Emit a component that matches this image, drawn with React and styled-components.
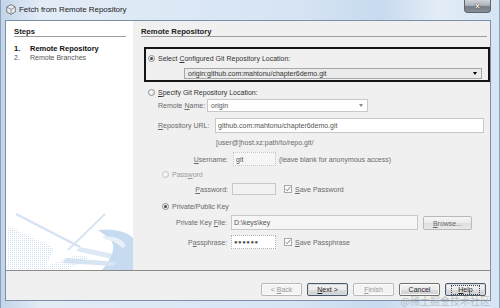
import React from 'react';
import styled, { createGlobalStyle } from 'styled-components';

const Global = createGlobalStyle`
  html, body { margin: 0; padding: 0; width: 500px; height: 308px; overflow: hidden; background: #fff; }
  #root { width: 500px; height: 308px; }
  * { box-sizing: border-box; }
`;

const Window = styled.div`
  position: relative;
  width: 500px;
  height: 308px;
  display: flex;
  flex-direction: column;
  padding: 0 8px 7px 4px;
  background: linear-gradient(90deg, #c3d4e9 0%, #e2ecf7 8%, #dce8f5 35%, #d6e4f3 60%, #c7daef 76%, #e3edf8 88%, #d6e4f3 100%);
  border-left: 1px solid #8aa0bb;
  border-right: 1px solid #8aa0bb;
  font-family: "Liberation Sans", Arial, sans-serif;
  color: #333;
`;

const TitleBar = styled.div`
  height: 20px;
  flex: none;
  display: flex;
  align-items: flex-start;
  padding-left: 1px;
`;

const TitleIcon = styled.svg`
  margin-top: 4px;
  width: 10px;
  height: 11px;
  flex: none;
`;

const TitleText = styled.div`
  margin-top: 5px;
  margin-left: 3px;
  font-size: 8px;
  line-height: 10px;
  color: #1c1c1c;
  letter-spacing: -0.05px;
`;

const CloseButton = styled.div`
  margin-left: auto;
  width: 27px;
  height: 13px;
  border: 1px solid #5c636c;
  border-top: none;
  border-radius: 0 0 4px 4px;
  background: linear-gradient(180deg, #d0d4d9 0%, #acb2b9 45%, #767d86 55%, #868d95 100%);
  display: flex;
  align-items: center;
  justify-content: center;
  color: #fff;
  font-size: 8px;
  font-weight: bold;
  line-height: 1;
  text-shadow: 0 0 1px #333, 0 0 1px #333;
`;

const Dialog = styled.div`
  flex: 1;
  display: flex;
  flex-direction: column;
  background: #f0f0f0;
  border: 1px solid #7b8fa8;
  min-height: 0;
`;

const Main = styled.div`
  flex: 1;
  display: flex;
  min-height: 0;
`;

const StepsPanel = styled.div`
  width: 127px;
  flex: none;
  background: #fff;
  display: flex;
  flex-direction: column;
`;

const StepsInner = styled.div`
  padding: 6px 7px 0 8px;
`;

const SectionTitle = styled.div`
  font-size: 7.7px;
  font-weight: bold;
  line-height: 9px;
  color: #222;
  border-bottom: 1px solid #9c9c9c;
  margin-right: ${p => p.$mr || 0}px;
`;

const StepList = styled.div`
  margin-top: 7px;
  display: flex;
  flex-direction: column;
`;

const Step = styled.div`
  display: flex;
  font-size: ${p => (p.$active ? 7.5 : 7)}px;
  line-height: 9px;
  font-weight: ${p => (p.$active ? 'bold' : 'normal')};
  color: ${p => (p.$active ? '#111' : '#555')};
`;

const StepNum = styled.span`
  width: 16px;
  flex: none;
`;

const Decoration = styled.svg`
  margin-top: auto;
  display: block;
  width: 127px;
  height: 60px;
`;

const Content = styled.div`
  flex: 1;
  padding: 6px 1px 0 8px;
  display: flex;
  flex-direction: column;
`;

const HighlightBox = styled.div`
  margin: 10px -1px 0 3px;
  border: 2px solid #151515;
  padding: 2px 6px 1px 2px;
  display: flex;
  flex-direction: column;
`;

const OptionRow = styled.div`
  display: flex;
  align-items: center;
  height: 10px;
  margin-top: ${p => p.$mt || 0}px;
  padding-left: ${p => p.$indent || 0}px;
  font-size: 7px;
  color: ${p => p.$color || '#333'};
  gap: 3px;
  white-space: nowrap;
`;

const Radio = styled.span`
  position: relative;
  width: 7px;
  height: 7px;
  flex: none;
  border-radius: 50%;
  border: 1px solid ${p => (p.$disabled ? '#c4c4c4' : '#8e8e8e')};
  background: radial-gradient(circle at 40% 40%, #ffffff 0%, #e4e4e4 100%);
  &::after {
    content: '';
    display: ${p => (p.$checked ? 'block' : 'none')};
    position: absolute;
    left: 1px;
    top: 1px;
    width: 3px;
    height: 3px;
    border-radius: 50%;
    background: #4a4a4a;
  }
`;

const Mn = styled.span`
  text-decoration: underline;
  text-underline-offset: 1px;
`;

const Combo = styled.div`
  display: flex;
  align-items: center;
  height: ${p => p.$h || 11}px;
  width: ${p => (p.$w ? `${p.$w}px` : 'auto')};
  margin: ${p => p.$margin || '0'};
  padding: 0 4px 0 3px;
  background: ${p => p.$bg || '#fff'};
  border: 1px solid ${p => p.$border || '#bdbdbd'};
  font-size: 7px;
  color: ${p => p.$color || '#444'};
  white-space: nowrap;
  overflow: hidden;
  flex: none;
`;

const ComboText = styled.span`
  flex: 1;
`;

const Arrow = styled.span`
  width: 0;
  height: 0;
  border-left: 2.5px solid transparent;
  border-right: 2.5px solid transparent;
  border-top: 3px solid ${p => p.$color || '#000'};
  flex: none;
`;

const FieldRow = styled.div`
  display: flex;
  align-items: center;
  height: ${p => p.$h}px;
  margin-top: ${p => p.$mt || 0}px;
  padding-left: ${p => p.$indent || 0}px;
  font-size: 7px;
  color: #6a6a6a;
  white-space: nowrap;
`;

const Label = styled.span`
  width: ${p => p.$w}px;
  flex: none;
  text-align: ${p => (p.$right ? 'right' : 'left')};
  padding-right: ${p => p.$gap || 0}px;
  color: ${p => p.$color || '#6a6a6a'};
`;

const Field = styled.div`
  width: ${p => p.$w}px;
  height: 100%;
  flex: none;
  display: flex;
  align-items: center;
  padding-left: 2px;
  background: ${p => p.$bg || '#fff'};
  border: 1px ${p => p.$style || 'solid'} ${p => p.$border || '#c3c3c3'};
  color: ${p => p.$color || '#555'};
  font-size: ${p => p.$fs || 7}px;
  letter-spacing: ${p => p.$ls || 0}px;
  overflow: hidden;
`;

const Hint = styled.div`
  margin: 5px 0 0 75px;
  font-size: 7px;
  line-height: 9px;
  color: #6a6a6a;
`;

const Note = styled.span`
  margin-left: 3px;
  color: #6a6a6a;
`;

const CheckWrap = styled.span`
  display: flex;
  align-items: center;
  gap: 3px;
  margin-left: 8px;
  color: #6a6a6a;
`;

const CheckBox = styled.span`
  width: 8px;
  height: 8px;
  flex: none;
  border: 1px solid #a9a9a9;
  background: #fafafa;
  display: flex;
  align-items: center;
  justify-content: center;
`;

const BrowseButton = styled.div`
  margin-left: 5px;
  width: 49px;
  height: 14px;
  align-self: flex-end;
  border: 1px solid #b9b9b9;
  border-radius: 2px;
  background: linear-gradient(180deg, #f6f6f6 0%, #ebebeb 50%, #dfdfdf 51%, #e8e8e8 100%);
  display: flex;
  align-items: center;
  justify-content: center;
  font-size: 7px;
  color: #6a6a6a;
`;

const Footer = styled.div`
  height: 30px;
  flex: none;
  border-top: 1px solid #8a8a8a;
  padding: 12px 4px 0 0;
  display: flex;
  justify-content: flex-end;
  align-items: flex-start;
  gap: 5px;
`;

const Button = styled.div`
  width: 41px;
  height: 13px;
  border: 1px solid ${p => (p.$disabled ? '#b8b8b8' : p.$default ? '#4f5a66' : '#707070')};
  border-radius: 2px;
  background: ${p =>
    p.$disabled
      ? '#f4f4f4'
      : 'linear-gradient(180deg, #f3f3f3 0%, #ebebeb 50%, #dddddd 51%, #cfcfcf 100%)'};
  box-shadow: ${p => (p.$default ? 'inset 0 0 0 1px #cfdbe6' : 'inset 0 0 0 1px #fbfbfb')};
  display: flex;
  align-items: center;
  justify-content: center;
  font-size: 7px;
  color: ${p => (p.$disabled ? '#9a9a9a' : '#1e1e1e')};
  white-space: pre;
`;

const FocusText = styled.span`
  outline: 1px dotted #444;
  outline-offset: 0px;
  padding: 0 6px;
  line-height: 8px;
`;

const Watermark = styled.div`
  position: absolute;
  right: 9px;
  bottom: 1px;
  font-family: "Noto Sans CJK SC", "Liberation Sans", sans-serif;
  font-size: 10px;
  line-height: 12px;
  color: rgba(150, 150, 150, 0.55);
  pointer-events: none;
`;

const Check = () => (
  <svg width="6" height="6" viewBox="0 0 6 6">
    <path d="M0.8 3.2 L2.3 4.8 L5.3 0.8" fill="none" stroke="#7a7a7a" strokeWidth="0.9" />
  </svg>
);

export default function App() {
  return (
    <>
      <Global />
      <Window>
        <TitleBar>
          <TitleIcon viewBox="0 0 10 11">
            <path d="M5 0.6 L9.3 3 L9.3 8 L5 10.4 L0.7 8 L0.7 3 Z" fill="#e8eaec" stroke="#6f7378" strokeWidth="0.9" />
            <path d="M0.9 3.1 L5 5.4 L9.1 3.1 M5 5.4 L5 10.2" fill="none" stroke="#7b7f84" strokeWidth="0.8" />
          </TitleIcon>
          <TitleText>Fetch from Remote Repository</TitleText>
          <CloseButton>x</CloseButton>
        </TitleBar>
        <Dialog>
          <Main>
            <StepsPanel>
              <StepsInner>
                <SectionTitle>Steps</SectionTitle>
                <StepList>
                  <Step $active>
                    <StepNum>1.</StepNum>
                    Remote Repository
                  </Step>
                  <Step>
                    <StepNum>2.</StepNum>
                    Remote Branches
                  </Step>
                </StepList>
              </StepsInner>
              <Decoration viewBox="0 0 127 60">
                <defs>
                  <pattern id="dots" width="2" height="2" patternUnits="userSpaceOnUse">
                    <rect width="1" height="1" fill="#c3d6ec" />
                  </pattern>
                </defs>
                <path d="M2 16 L48 38 L38 60 L2 60 Z" fill="url(#dots)" opacity="0.8" />
                <path d="M10 4 L74 37" stroke="#d5e2f1" strokeWidth="2.5" />
                <path d="M99 4 L62 40" stroke="#d9e5f2" strokeWidth="2" />
                <path d="M74 37 L108 44 L106 49 L70 41 Z" fill="#dfe9f5" />
                <path d="M92 20 C108 18 122 22 127 28 L127 60 L96 60 C104 50 110 40 106 32 C103 27 97 24 92 20 Z" fill="#c6daf0" />
                <path d="M97 26 C110 26 118 30 120 36 L116 38 C112 33 105 30 98 29 Z" fill="#e8f0f9" />
                <path d="M60 48 L110 52 L108 56 L56 53 Z" fill="#d6e4f3" />
                <path d="M30 60 L70 45 L85 47 L60 60 Z" fill="url(#dots)" opacity="0.7" />
              </Decoration>
            </StepsPanel>
            <Content>
              <SectionTitle $mr={2}>Remote Repository</SectionTitle>
              <HighlightBox>
                <OptionRow $mt={2}>
                  <Radio $checked />
                  <span>
                    Select <Mn>C</Mn>onfigured Git Repository Location:
                  </span>
                </OptionRow>
                <Combo $margin="5px 0 0 36px" $bg="#ebebeb" $border="#a8a8a8" $color="#333">
                  <ComboText>origin:github.com:mahtonu/chapter6demo.git</ComboText>
                  <Arrow />
                </Combo>
              </HighlightBox>
              <OptionRow $mt={5} $indent={7}>
                <Radio />
                <span>
                  <Mn>S</Mn>pecify Git Repository Location:
                </span>
              </OptionRow>
              <FieldRow $h={13} $mt={2} $indent={17}>
                <Label $w={49}>
                  Remote <Mn>N</Mn>ame:
                </Label>
                <Combo $w={161} $h={13} $color="#555" $border="#c8c8c8">
                  <ComboText>origin</ComboText>
                  <Arrow $color="#8a8a8a" />
                </Combo>
              </FieldRow>
              <FieldRow $h={15} $mt={6} $indent={17}>
                <Label $w={57}>
                  <Mn>R</Mn>epository URL:
                </Label>
                <Field $w={269} $border="#c8c8c8">github.com:mahtonu/chapter6demo.git</Field>
              </FieldRow>
              <Hint>[user@]host.xz:path/to/repo.git/</Hint>
              <FieldRow $h={14} $mt={5}>
                <Label $w={92} $right $gap={5}>
                  <Mn>U</Mn>sername:
                </Label>
                <Field $w={43} $bg="#f6f6f6" $border="#c6c6c6" $style="dotted">git</Field>
                <Note>(leave blank for anonymous access)</Note>
              </FieldRow>
              <OptionRow $mt={3} $indent={21} $color="#9a9a9a">
                <Radio $disabled />
                <span>
                  Pass<Mn>w</Mn>ord
                </span>
              </OptionRow>
              <FieldRow $h={12} $mt={4}>
                <Label $w={91} $right $gap={4}>
                  <Mn>P</Mn>assword:
                </Label>
                <Field $w={44} $bg="#f2f2f2" $border="#c8c8c8" />
                <CheckWrap>
                  <CheckBox>
                    <Check />
                  </CheckBox>
                  <span>
                    <Mn>S</Mn>ave Password
                  </span>
                </CheckWrap>
              </FieldRow>
              <OptionRow $mt={6} $indent={21} $color="#666">
                <Radio $checked />
                <span>Private/Public Key</span>
              </OptionRow>
              <FieldRow $h={15} $mt={4}>
                <Label $w={90} $right $gap={4}>
                  Private Key <Mn>F</Mn>ile:
                </Label>
                <Field $w={187} $bg="#f6f6f6" $border="#c8c8c8">D:\keys\key</Field>
                <BrowseButton>
                  <span>
                    <Mn>B</Mn>rowse...
                  </span>
                </BrowseButton>
              </FieldRow>
              <FieldRow $h={14} $mt={5}>
                <Label $w={90} $right $gap={4}>
                  P<Mn>a</Mn>ssphrase:
                </Label>
                <Field $w={45} $border="#b0b0b0" $style="dotted" $color="#555" $fs={6} $ls={0.5}>
                  ●●●●●●
                </Field>
                <CheckWrap>
                  <CheckBox>
                    <Check />
                  </CheckBox>
                  <span>
                    <Mn>S</Mn>ave Passphrase
                  </span>
                </CheckWrap>
              </FieldRow>
            </Content>
          </Main>
          <Footer>
            <Button $disabled>
              <span>
                {'< '}
                <Mn>B</Mn>ack
              </span>
            </Button>
            <Button $default>
              <span>
                <Mn>N</Mn>ext {'>'}
              </span>
            </Button>
            <Button $disabled>
              <span>
                <Mn>F</Mn>inish
              </span>
            </Button>
            <Button>Cancel</Button>
            <Button $default>
              <FocusText>
                <Mn>H</Mn>elp
              </FocusText>
            </Button>
          </Footer>
        </Dialog>
        <Watermark>@稀土掘金技术社区</Watermark>
      </Window>
    </>
  );
}
